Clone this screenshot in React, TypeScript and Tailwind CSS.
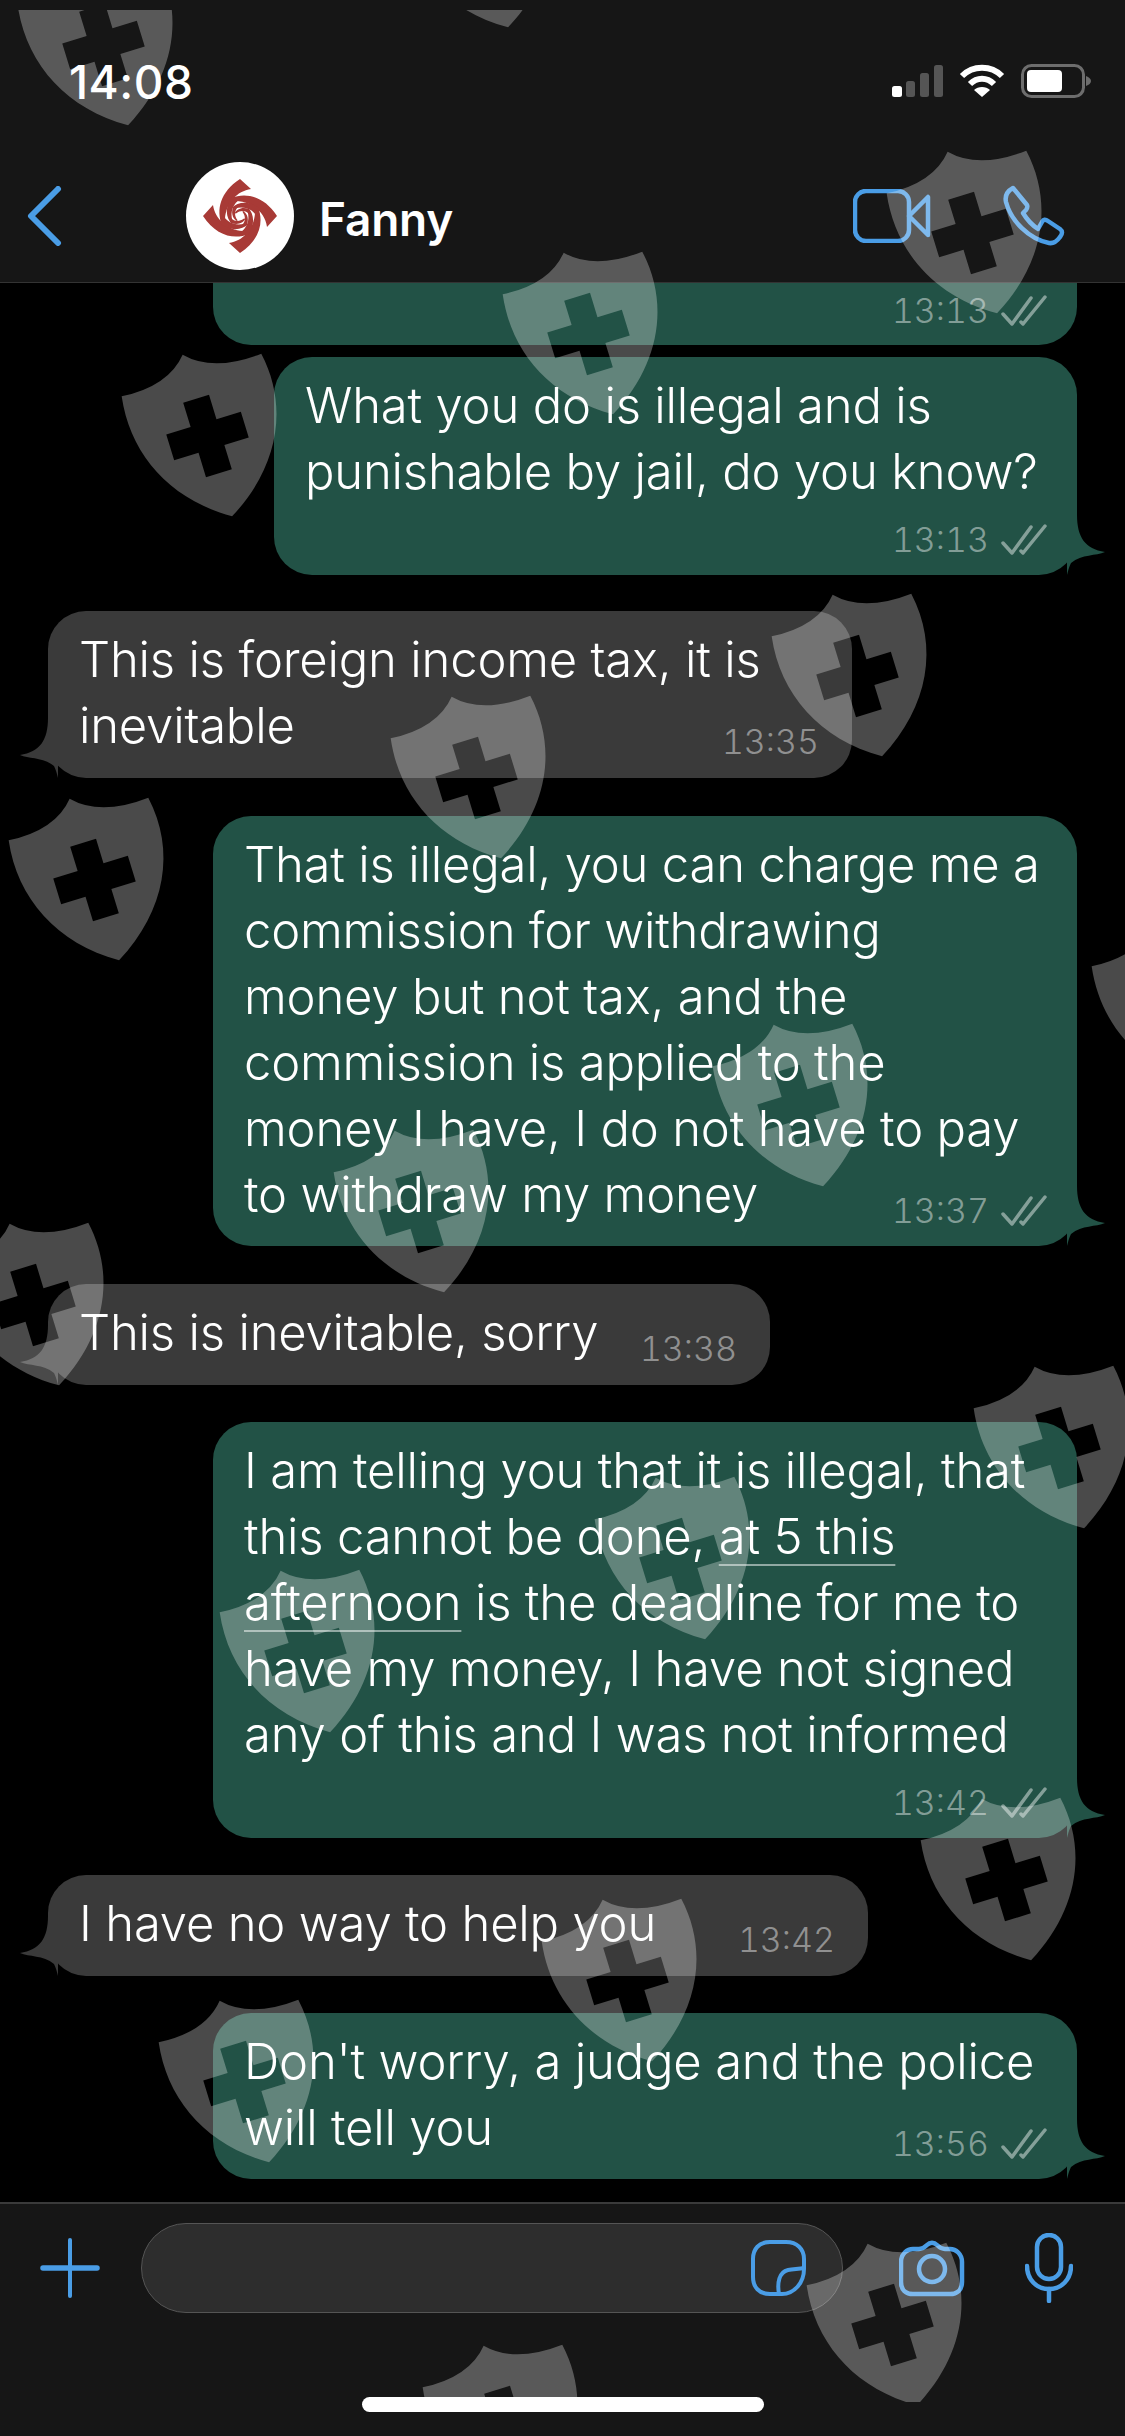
const BLUE = "#4a9de6";

const SHIELDS = [
  "left-[33px] top-[-50px]",
  "left-[413px] top-[-148px]",
  "left-[902px] top-[138px]",
  "left-[518px] top-[239px]",
  "left-[137px] top-[341px]",
  "left-[787px] top-[581px]",
  "left-[406px] top-[683px]",
  "left-[24px] top-[785px]",
  "left-[728px] top-[1011px]",
  "left-[349px] top-[1117px]",
  "left-[1107px] top-[911px]",
  "left-[-36px] top-[1210px]",
  "left-[989px] top-[1353px]",
  "left-[610px] top-[1464px]",
  "left-[235px] top-[1557px]",
  "left-[936px] top-[1785px]",
  "left-[557px] top-[1886px]",
  "left-[174px] top-[1987px]",
  "left-[822px] top-[2230px]",
  "left-[438px] top-[2332px]",
];

function Shield({ className }: { className: string }) {
  return (
    <svg
      viewBox="0 0 141 169"
      className={`absolute h-[169px] w-[141px] origin-[70.5px_85px] rotate-[-17deg] overflow-visible ${className}`}
    >
      <path
        fill="#fff"
        fillOpacity="0.29"
        fillRule="evenodd"
        d="M70.5 0Q95 26 146 22C157 80 130 135 70.5 169C16 135 -9 80 0 22Q48 26 70.5 0ZM57 46V71.5H31.5V98.5H57V124H84V98.5H109.5V71.5H84V46Z"
      />
    </svg>
  );
}

function DoubleCheck() {
  return (
    <svg viewBox="0 0 46 32" className="ml-[12px] h-[32px] w-[46px]" fill="none" stroke="#fff" strokeOpacity="0.45" strokeWidth="3.5" strokeLinecap="round" strokeLinejoin="round">
      <path d="M2 19L11 29L30 3" />
      <path d="M20 27L22 29L44 2" />
    </svg>
  );
}

function Time({ value, read, className = "" }: { value: string; read?: boolean; className?: string }) {
  return (
    <div className={`flex h-[40px] shrink-0 items-center justify-end text-[34px] tracking-[0px] tabular-nums text-white/45 ${className}`}>
      <span>{value}</span>
      {read && <DoubleCheck />}
    </div>
  );
}

function SentTail({ fill }: { fill: string }) {
  return (
    <svg viewBox="0 0 40 60" className="absolute bottom-0 right-[-30px] h-[60px] w-[40px]">
      <path fill={fill} d="M0 0H10C10 22 18 34 38 37C29 41 15 39 4 48C2 52 1 56 0 60Z" />
    </svg>
  );
}

function ReceivedTail({ fill }: { fill: string }) {
  return (
    <svg viewBox="0 0 40 60" className="absolute bottom-0 left-[-30px] h-[60px] w-[40px]">
      <path fill={fill} d="M40 0H30C30 22 22 34 2 37C11 41 25 39 36 48C38 52 39 56 40 60Z" />
    </svg>
  );
}

function Sent({
  width,
  className = "",
  time,
  timeGap,
  children,
}: {
  width: string;
  className?: string;
  time: string;
  timeGap: string;
  children: React.ReactNode;
}) {
  return (
    <div className={`relative ml-auto mr-[48px] rounded-[38px] bg-[#225246] pb-[15px] pl-[31px] pr-[30px] pt-[16px] ${width} ${className}`}>
      <div className="whitespace-nowrap">{children}</div>
      <Time value={time} read className={timeGap} />
      <SentTail fill="#225246" />
    </div>
  );
}

function Received({
  width,
  className = "",
  time,
  children,
}: {
  width: string;
  className?: string;
  time: string;
  children: React.ReactNode;
}) {
  return (
    <div className={`relative ml-[48px] flex items-end rounded-[38px] bg-[#3a3a3a] pb-[19px] pl-[31px] pr-[33px] pt-[16px] ${width} ${className}`}>
      <div className="w-0 flex-1 whitespace-nowrap">{children}</div>
      <Time value={time} className="mb-[-3px]" />
      <ReceivedTail fill="#3a3a3a" />
    </div>
  );
}

function Logo() {
  const blade = "M0 -37L11 -27C-3 -25 -14 -13 -15 3L-18 9C-24 -6 -20 -24 0 -37Z";
  return (
    <svg viewBox="-54 -54 108 108" className="h-[108px] w-[108px] rounded-full bg-white">
      <g fill="#a83a36">
        {[0, 90, 180, 270].map((r) => (
          <path key={r} d={blade} transform={`rotate(${r})`} />
        ))}
        {[0, 90, 180, 270].map((r) => (
          <path key={r} d={blade} transform={`rotate(${r + 70}) scale(0.58)`} />
        ))}
        {[0, 90, 180, 270].map((r) => (
          <path key={r} d={blade} transform={`rotate(${r + 140}) scale(0.3)`} />
        ))}
      </g>
    </svg>
  );
}

function StatusIcons() {
  return (
    <div className="flex items-center">
      <svg viewBox="0 0 52 32" className="h-[32px] w-[52px]">
        <rect x="0" y="21" width="10" height="11" rx="2.5" fill="#fff" />
        <rect x="14" y="16" width="9" height="16" rx="2.5" fill="#555" />
        <rect x="28" y="8" width="9" height="24" rx="2.5" fill="#555" />
        <rect x="42" y="0" width="9" height="32" rx="2.5" fill="#555" />
      </svg>
      <svg viewBox="0 0 46 34" className="ml-[15px] h-[34px] w-[46px]" fill="none" stroke="#fff" strokeWidth="6">
        <path d="M3 12C14 1 32 1 43 12" />
        <path d="M11 20C18 13 28 13 35 20" />
        <path d="M23 33L15 26C19 22 27 22 31 26Z" fill="#fff" stroke="none" />
      </svg>
      <svg viewBox="0 0 70 34" className="ml-[16px] h-[34px] w-[70px]">
        <rect x="1.5" y="1.5" width="61" height="31" rx="9" fill="none" stroke="#6d6d6d" strokeWidth="3" />
        <rect x="6" y="6" width="35" height="22" rx="4" fill="#fff" />
        <path d="M65 12C68 13 70 15 70 17C70 19 68 21 65 22Z" fill="#6d6d6d" />
      </svg>
    </div>
  );
}

function Header() {
  return (
    <header className="flex h-[283px] shrink-0 flex-col border-b border-[#333] bg-[#161616]">
      <div className="mt-[50px] flex h-[62px] items-center justify-between pl-[69px] pr-[34px]">
        <span className="pt-[2px] text-[46px] font-medium tracking-[0.5px] text-white">14:08</span>
        <StatusIcons />
      </div>
      <div className="mt-[50px] flex h-[108px] items-center pl-[27px] pr-[58px]">
        <svg viewBox="0 0 36 60" className="h-[60px] w-[36px]" fill="none" stroke={BLUE} strokeWidth="6" strokeLinecap="round" strokeLinejoin="round">
          <path d="M31 3L4 30L31 57" />
        </svg>
        <div className="ml-[123px]">
          <Logo />
        </div>
        <span className="ml-[25px] pt-[5px] text-[46px] font-semibold text-white">Fanny</span>
        <svg viewBox="0 0 78 54" className="ml-auto h-[54px] w-[78px]" fill="none" stroke={BLUE} strokeWidth="4.5" strokeLinejoin="round">
          <rect x="2" y="2" width="54" height="50" rx="11" />
          <path d="M56 27L75 8V46Z" />
        </svg>
        <svg viewBox="0 0 64 62" className="ml-[72px] h-[62px] w-[64px]" fill="none" stroke={BLUE} strokeWidth="4.5" strokeLinejoin="round">
          <path d="M10 3L24 20Q25 22 23 25L20 28Q26 38 35 44L39 37Q41 33 45 36L57 44Q61 47 57 52Q52 59 46 58C26 54 8 36 3 17Q1 8 10 3Z" />
        </svg>
      </div>
    </header>
  );
}

function Footer() {
  return (
    <footer className="flex h-[234px] shrink-0 flex-col border-t-2 border-[#3a3a3a] bg-[#161616] pt-[19px]">
      <div className="flex h-[90px] items-center pl-[40px]">
        <svg viewBox="0 0 60 60" className="h-[60px] w-[60px]" stroke={BLUE} strokeLinecap="round">
          <path d="M30 2V58" strokeWidth="4" />
          <path d="M3 30H57" strokeWidth="5.5" />
        </svg>
        <div className="ml-[41px] flex h-[90px] w-[702px] items-center justify-end rounded-full border border-[#555] bg-[#2d2d2d] pr-[36px]">
          <svg viewBox="0 0 56 58" className="h-[58px] w-[56px]" fill="none" stroke={BLUE} strokeWidth="4">
            <path d="M20 3H36C47 3 54 10 54 20V30C54 44 44 55 32 55H20C9 55 3 48 3 38V20C3 10 9 3 20 3Z" />
            <path d="M29 55C27 44 29 33 38 31C44 30 49 30 54 29" />
          </svg>
        </div>
        <svg viewBox="0 0 66 58" className="ml-[56px] h-[58px] w-[66px]" fill="none" stroke={BLUE} strokeWidth="4.5">
          <path d="M14 10H20C24 10 26 8 28 6C31 3 35 3 38 6C40 8 42 10 46 10H51C57 10 63 15 63 23V43C63 51 58 55 51 55H14C7 55 2 51 2 43V23C2 15 8 10 14 10Z" />
          <circle cx="33" cy="30" r="13" />
        </svg>
        <svg viewBox="0 0 48 70" className="ml-[60px] h-[70px] w-[48px]" fill="none" stroke={BLUE} strokeWidth="4.5" strokeLinecap="round">
          <rect x="12" y="2" width="24" height="44" rx="12" />
          <path d="M2 33C2 47 12 56 24 56C36 56 46 47 46 33" />
          <path d="M24 56V68" />
        </svg>
      </div>
      <div className="mx-auto mt-[84px] h-[15px] w-[402px] rounded-full bg-white" />
    </footer>
  );
}

export default function App() {
  return (
    <div className="relative flex h-[2436px] w-[1125px] flex-col overflow-hidden bg-black font-['Inter',sans-serif] text-[49px] font-[350] leading-[66px] tracking-[-0.2px] text-white">
      <Header />
      <main className="min-h-0 flex-1 overflow-hidden">
        <div className="relative ml-auto mr-[48px] flex h-[62px] w-[864px] items-start justify-end rounded-b-[38px] bg-[#225246] pr-[30px] pt-[8px]">
          <Time value="13:13" read />
        </div>
        <Sent width="w-[803px]" className="mt-[12px]" time="13:13" timeGap="mt-[15px]">
          What you do is illegal and is
          <br />
          punishable by jail, do you know?
        </Sent>
        <Received width="w-[804px]" className="mt-[36px]" time="13:35">
          This is foreign income tax, it is
          <br />
          inevitable
        </Received>
        <Sent width="w-[864px]" className="mt-[38px]" time="13:37" timeGap="mt-[-37px]">
          That is illegal, you can charge me a
          <br />
          commission for withdrawing
          <br />
          money but not tax, and the
          <br />
          commission is applied to the
          <br />
          money I have, I do not have to pay
          <br />
          to withdraw my money
        </Sent>
        <Received width="w-[722px]" className="mt-[38px]" time="13:38">
          This is inevitable, sorry
        </Received>
        <Sent width="w-[864px]" className="mt-[37px]" time="13:42" timeGap="mt-[15px]">
          I am telling you that it is illegal, that
          <br />
          this cannot be done,{" "}
          <span className="underline decoration-white/50 decoration-[2px] underline-offset-[10px]">at 5 this</span>
          <br />
          <span className="underline decoration-white/50 decoration-[2px] underline-offset-[10px]">afternoon</span> is the deadline for me to
          <br />
          have my money, I have not signed
          <br />
          any of this and I was not informed
        </Sent>
        <Received width="w-[820px]" className="mt-[37px]" time="13:42">
          I have no way to help you
        </Received>
        <Sent width="w-[864px]" className="mt-[37px]" time="13:56" timeGap="mt-[-37px]">
          Don't worry, a judge and the police
          <br />
          will tell you
        </Sent>
      </main>
      <Footer />
      {/* watermark stamped over the whole screenshot */}
      <div className="pointer-events-none absolute inset-x-0 top-[10px] h-[2392px] overflow-hidden">
        {SHIELDS.map((s) => (
          <Shield key={s} className={s} />
        ))}
      </div>
    </div>
  );
}
